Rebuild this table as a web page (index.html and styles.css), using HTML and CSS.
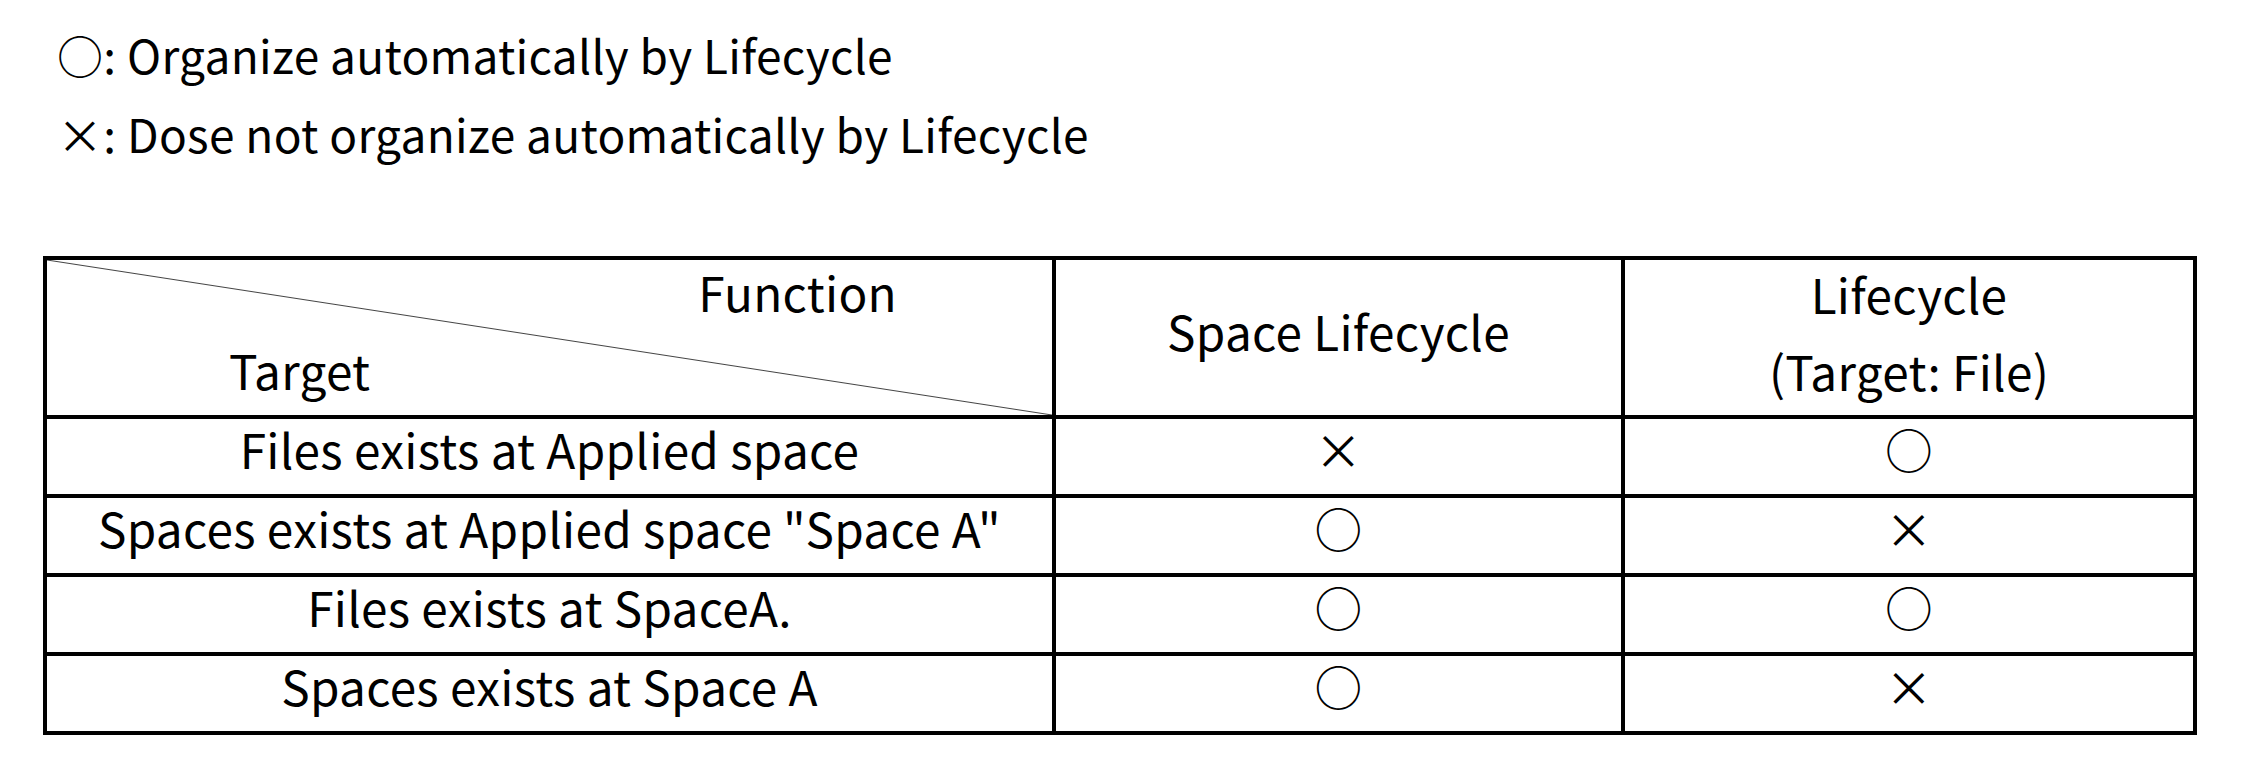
FILE: index.html
```html
<!DOCTYPE html>
<html>
<head>
<meta charset="utf-8">
<link rel="stylesheet" href="styles.css">
</head>
<body>
<div class="legend">
  <div class="legend-line">○: Organize automatically by Lifecycle</div>
  <div class="legend-line">×: Dose not organize automatically by Lifecycle</div>
</div>
<table class="matrix">
  <colgroup>
    <col class="c1"><col class="c2"><col class="c3">
  </colgroup>
  <tr class="head">
    <th class="diag">
      <div class="fn">Function</div>
      <div class="tg">Target</div>
    </th>
    <th class="single">Space Lifecycle</th>
    <th class="double"><div class="two">Lifecycle<br>(Target: File)</div></th>
  </tr>
  <tr><td>Files exists at Applied space</td><td class="mark">×</td><td class="mark">○</td></tr>
  <tr><td>Spaces exists at Applied space "Space A"</td><td class="mark">○</td><td class="mark">×</td></tr>
  <tr><td>Files exists at SpaceA.</td><td class="mark">○</td><td class="mark">○</td></tr>
  <tr><td>Spaces exists at Space A</td><td class="mark">○</td><td class="mark">×</td></tr>
</table>
</body>
</html>
```
FILE: styles.css
```css
html, body {
  margin: 0;
  padding: 0;
  background: #fff;
}
body {
  font-family: "Noto Sans CJK JP", "Noto Sans", sans-serif;
  color: #000;
  letter-spacing: 0.3px;
}
.legend {
  padding: 15px 0 6px 57px;
  font-size: 46px;
}
.legend-line {
  height: 79px;
  line-height: 79px;
}
.matrix {
  margin: 77px 0 0 43px;
  border-collapse: collapse;
  table-layout: fixed;
  width: 2150px;
  font-size: 47.7px;
}
.c1 { width: 1009px; }
.c2 { width: 569px; }
.c3 { width: 572px; }
.matrix th, .matrix td {
  border: 4px solid #000;
  padding: 0;
  text-align: center;
  font-weight: normal;
  vertical-align: middle;
}
.matrix td {
  height: 59px;
  line-height: 59px;
  padding-bottom: 16px;
}
.matrix th.single {
  height: 141px;
  line-height: 77px;
  padding-bottom: 14px;
}
.matrix th.double {
  height: 155px;
  line-height: 77px;
}
.two {
  margin-top: -11px;
}
.matrix th.diag {
  height: 155px;
  background: linear-gradient(to top right, transparent calc(50% - 1px), #444 50%, transparent calc(50% + 1px));
}
.fn {
  height: 64px;
  line-height: 64px;
  text-align: right;
  padding-right: 155px;
}
.tg {
  height: 91px;
  line-height: 91px;
  text-align: left;
  padding-left: 182px;
}
```
